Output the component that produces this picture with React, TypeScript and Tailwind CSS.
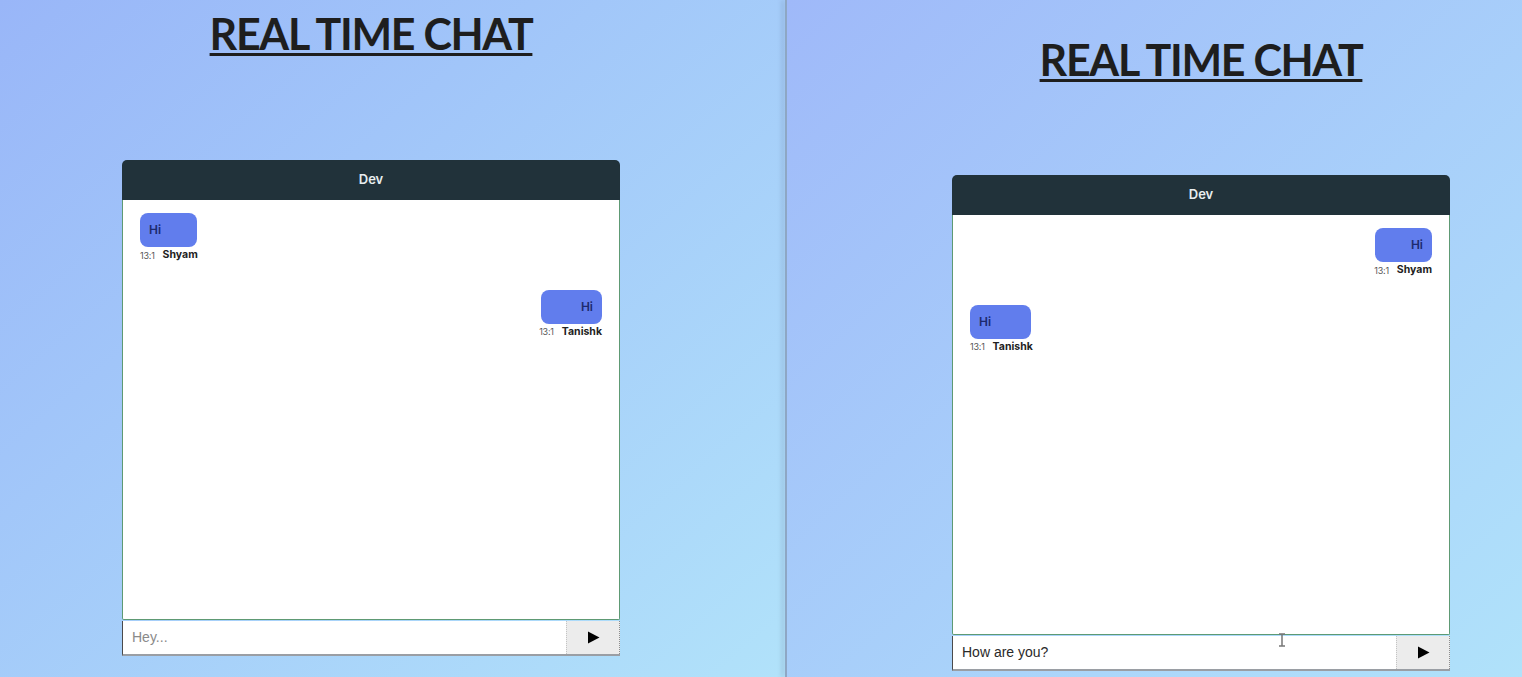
interface Message {
  text: string;
  time: string;
  author: string;
  mine: boolean;
  width: string;
}

interface ChatWindowProps {
  messages: Message[];
  draft: string;
  placeholder: string;
}

const chatFont = { fontFamily: "Inter, 'Noto Sans', sans-serif" };
const inputFont = { fontFamily: "'Liberation Sans', Arial, sans-serif" };

function ChatBubble({ message }: { message: Message }) {
  return (
    <div className={`flex flex-col ${message.mine ? "items-end" : "items-start"}`}>
      <div
        className={`${message.width} h-[34px] rounded-[8px] bg-[#617ded] px-[9px] flex items-center ${
          message.mine ? "justify-end" : "justify-start"
        }`}
      >
        <span className="text-[12px] font-semibold text-[#1d2a6e]">{message.text}</span>
      </div>
      <div className="mt-[3px] flex items-center gap-[8px] leading-none">
        <span className="text-[9px] text-[#555] tracking-tight">{message.time}</span>
        <span className="text-[10.5px] font-bold text-[#222]">{message.author}</span>
      </div>
    </div>
  );
}

function ChatWindow({ messages, draft, placeholder }: ChatWindowProps) {
  return (
    <div className="w-[498px]" style={chatFont}>
      <div className="h-[40px] rounded-t-[5px] bg-[#21323a] flex items-center justify-center">
        <span className="text-[13px] font-semibold text-[#e8eef0]">Dev</span>
      </div>
      <div className="h-[420px] bg-white border border-t-0 border-[#5e9a74] rounded-b-[2px] px-[17px] pt-[13px] flex flex-col gap-[29px]">
        {messages.map((m, i) => (
          <ChatBubble key={i} message={m} />
        ))}
      </div>
      <div className="mt-[1px] h-[35px] flex bg-white border-l border-[#4b4b4b] border-b-2 border-b-[#9a9ea4]">
        <div className="flex-1 flex items-center pl-[9px]">
          {draft ? (
            <span className="text-[14px] text-[#2a2a2a]" style={inputFont}>
              {draft}
            </span>
          ) : (
            <span className="text-[14px] text-[#8a8a8a]" style={inputFont}>
              {placeholder}
            </span>
          )}
        </div>
        <div className="w-[54px] bg-[#ececec] border-l border-dotted border-[#c4c4c4] border-r border-r-[#8d8d8d] flex items-center justify-center">
          <svg width="13" height="13" viewBox="0 0 13 13">
            <polygon points="1,0.5 12.5,6.5 1,12.5" fill="#000" />
          </svg>
        </div>
      </div>
    </div>
  );
}

function Title() {
  return (
    <h1
      className="text-[43px] font-bold text-[#1e1e1e] underline decoration-[3px] underline-offset-[3px] tracking-[-1.3px] leading-none text-center"
      style={{ fontFamily: "Lato, sans-serif" }}
    >
      REAL TIME CHAT
    </h1>
  );
}

export default function App() {
  const leftMessages: Message[] = [
    { text: "Hi", time: "13:1", author: "Shyam", mine: false, width: "w-[57px]" },
    { text: "Hi", time: "13:1", author: "Tanishk", mine: true, width: "w-[61px]" },
  ];
  const rightMessages: Message[] = [
    { text: "Hi", time: "13:1", author: "Shyam", mine: true, width: "w-[57px]" },
    { text: "Hi", time: "13:1", author: "Tanishk", mine: false, width: "w-[61px]" },
  ];

  return (
    <div className="w-[1522px] h-[677px] flex overflow-hidden">
      {/* left window */}
      <div className="w-[785px] h-full bg-linear-to-br from-[#99b6f8] to-[#b1e2fa] pl-[122px] pt-[12px]">
        <div className="w-[498px]">
          <Title />
          <div className="mt-[105px]">
            <ChatWindow messages={leftMessages} draft="" placeholder="Hey..." />
          </div>
        </div>
      </div>

      <div className="w-[2px] h-full bg-[#8ea7c4] shadow-[-3px_0_4px_rgba(90,110,140,0.35)]" />

      {/* right window */}
      <div className="relative flex-1 h-full bg-linear-to-br from-[#9fb9f9] to-[#b0e2fa] pl-[165px] pt-[38px]">
        <div className="w-[498px]">
          <Title />
          <div className="mt-[94px]">
            <ChatWindow messages={rightMessages} draft="How are you?" placeholder="" />
          </div>
        </div>
        <svg
          className="absolute left-[491px] top-[633px]"
          width="8"
          height="14"
          viewBox="0 0 8 14"
        >
          <path d="M1 1h6M4 1v12M1 13h6" stroke="#777" strokeWidth="1.5" fill="none" />
        </svg>
      </div>
    </div>
  );
}
